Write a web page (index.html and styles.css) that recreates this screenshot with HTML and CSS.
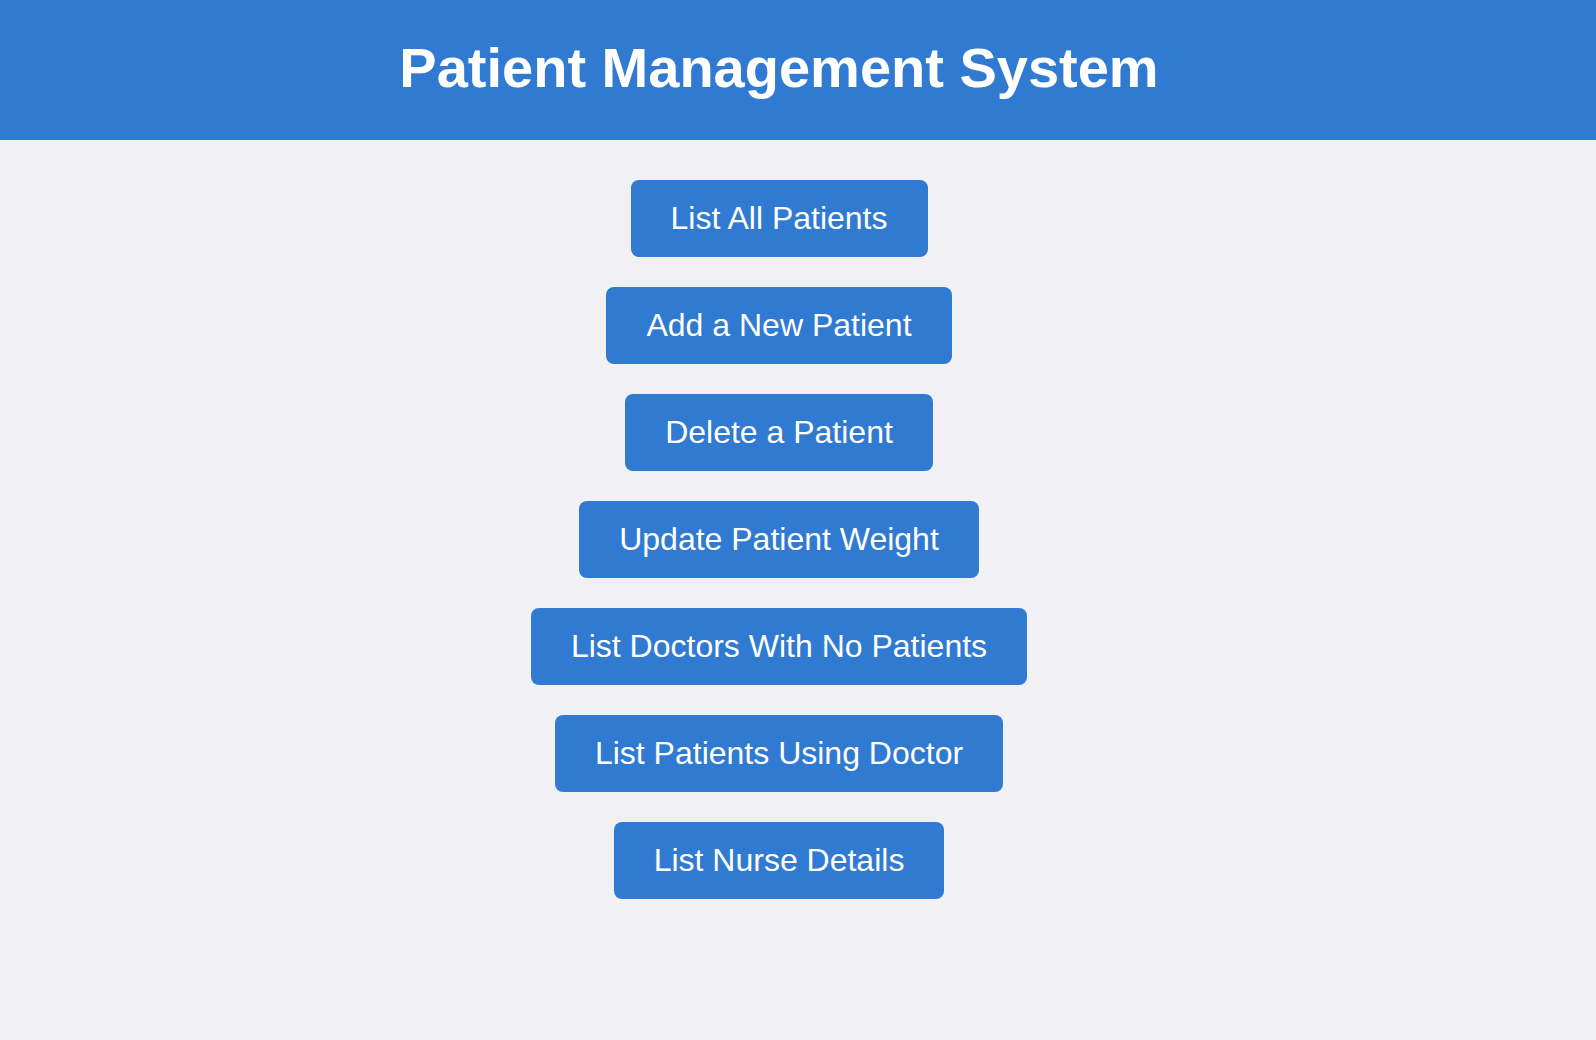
FILE: index.html
```html
<!DOCTYPE html>
<html lang="en">
<head>
<meta charset="utf-8">
<title>Patient Management System</title>
<link rel="stylesheet" href="styles.css">
</head>
<body>
<header class="header">
  <h1 class="title">Patient Management System</h1>
</header>
<main class="menu">
  <button class="menu-btn">List All Patients</button>
  <button class="menu-btn">Add a New Patient</button>
  <button class="menu-btn">Delete a Patient</button>
  <button class="menu-btn">Update Patient Weight</button>
  <button class="menu-btn">List Doctors With No Patients</button>
  <button class="menu-btn">List Patients Using Doctor</button>
  <button class="menu-btn">List Nurse Details</button>
</main>
</body>
</html>
```
FILE: styles.css
```css
html, body {
  margin: 0;
  padding: 0;
}
body {
  background: #f0f0f5;
  font-family: "Liberation Sans", Arial, Helvetica, sans-serif;
  min-height: 1040px;
}
.header {
  background: #307ad2;
  box-sizing: border-box;
  height: 140px;
  padding: 35px 38px 0 0;
  text-align: center;
}
.title {
  margin: 0;
  color: #ffffff;
  font-size: 56px;
  font-weight: bold;
  line-height: normal;
}
.menu {
  display: flex;
  flex-direction: column;
  align-items: center;
  gap: 30px;
  padding: 40px 38px 0 0;
}
.menu-btn {
  background: #307ad2;
  color: #ffffff;
  border: none;
  border-radius: 8px;
  padding: 20px 40px;
  font-family: "Liberation Sans", Arial, Helvetica, sans-serif;
  font-size: 32px;
  line-height: normal;
  cursor: pointer;
}
```
